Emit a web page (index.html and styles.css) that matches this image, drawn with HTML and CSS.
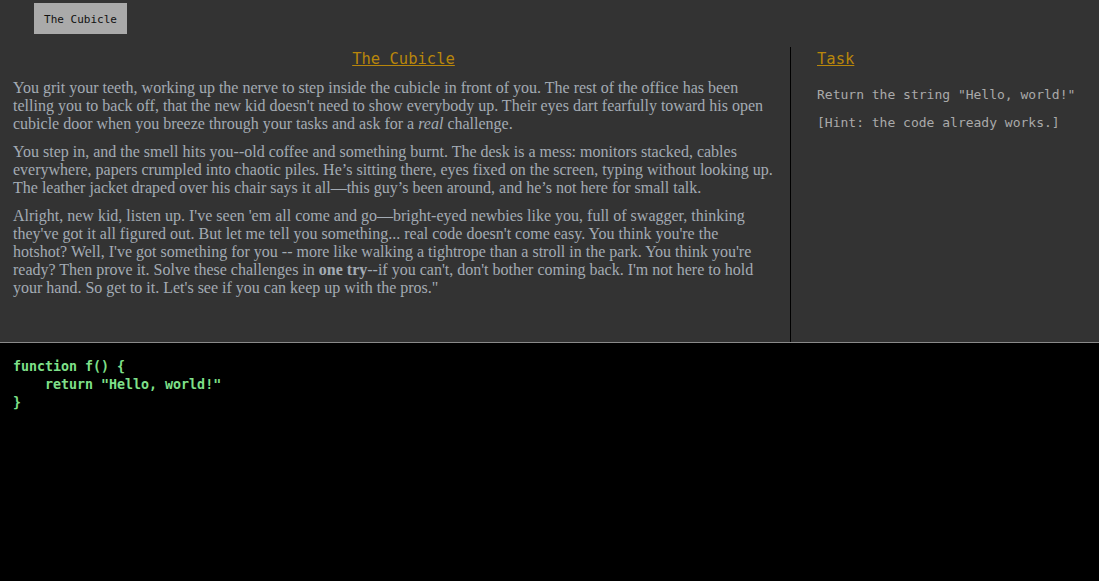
FILE: index.html
```html
<!DOCTYPE html>
<html>
<head>
<meta charset="utf-8">
<link rel="stylesheet" href="styles.css">
</head>
<body>
<div class="tabs"><button class="tab">The Cubicle</button></div>
<div class="main">
  <section class="story">
    <h2 class="title">The Cubicle</h2>
    <p>You grit your teeth, working up the nerve to step inside the cubicle in front of you. The rest of the office has been telling you to back off, that the new kid doesn't need to show everybody up. Their eyes dart fearfully toward his open cubicle door when you breeze through your tasks and ask for a <em>real</em> challenge.</p>
    <p>You step in, and the smell hits you--old coffee and something burnt. The desk is a mess: monitors stacked, cables everywhere, papers crumpled into chaotic piles. He’s sitting there, eyes fixed on the screen, typing without looking up. The leather jacket draped over his chair says it all—this guy’s been around, and he’s not here for small talk.</p>
    <p>Alright, new kid, listen up. I've seen 'em all come and go—bright-eyed newbies like you, full of swagger, thinking they've got it all figured out. But let me tell you something... real code doesn't come easy. You think you're the hotshot? Well, I've got something for you -- more like walking a tightrope than a stroll in the park. You think you're ready? Then prove it. Solve these challenges in <b>one try</b>--if you can't, don't bother coming back. I'm not here to hold your hand. So get to it. Let's see if you can keep up with the pros."</p>
  </section>
  <aside class="task">
    <h2 class="title">Task</h2>
    <p>Return the string "Hello, world!"</p>
    <p>[Hint: the code already works.]</p>
  </aside>
</div>
<pre class="editor">function f() {
    return "Hello, world!"
}</pre>
</body>
</html>
```
FILE: styles.css
```css
html, body {
  margin: 0;
  padding: 0;
  background: #333333;
  height: 100%;
}
body {
  display: flex;
  flex-direction: column;
}
.tabs {
  padding: 3px 34px 13px;
  display: flex;
}
.tab {
  font-family: "DejaVu Sans Mono", monospace;
  font-size: 11px;
  color: #111;
  background: #aaaaaa;
  border: none;
  height: 31px;
  width: 93px;
  padding: 1px 0 0;
}
.main {
  display: flex;
  height: 295px;
  border-bottom: 1px solid #8a8a8a;
}
.story {
  flex: 0 0 761px;
  padding: 0 16px 0 13px;
  border-right: 1px solid #000;
  font-family: "Liberation Serif", serif;
  font-size: 16px;
  line-height: 18px;
  color: #a3abb4;
}
.title {
  font-family: "DejaVu Sans Mono", monospace;
  font-weight: normal;
  font-size: 15.5px;
  line-height: 20px;
  color: #b8860b;
  text-decoration: underline;
  margin: 2px 0 10px;
}
.story .title {
  text-align: center;
  padding-left: 20px;
}
.story p {
  margin: 0 0 10px;
}
.task {
  flex: 1;
  padding: 0 12px 0 26px;
  font-family: "DejaVu Sans Mono", monospace;
  font-size: 13px;
  line-height: 18px;
  color: #aaaaaa;
}
.task .title {
  margin-bottom: 17px;
}
.task p {
  margin: 0 0 10px;
  white-space: nowrap;
}
.editor {
  flex: 1;
  margin: 0;
  background: #000;
  padding: 15px 13px;
  font-family: "DejaVu Sans Mono", monospace;
  font-weight: bold;
  font-size: 13.3px;
  line-height: 18px;
  color: #7fe08a;
}
```
